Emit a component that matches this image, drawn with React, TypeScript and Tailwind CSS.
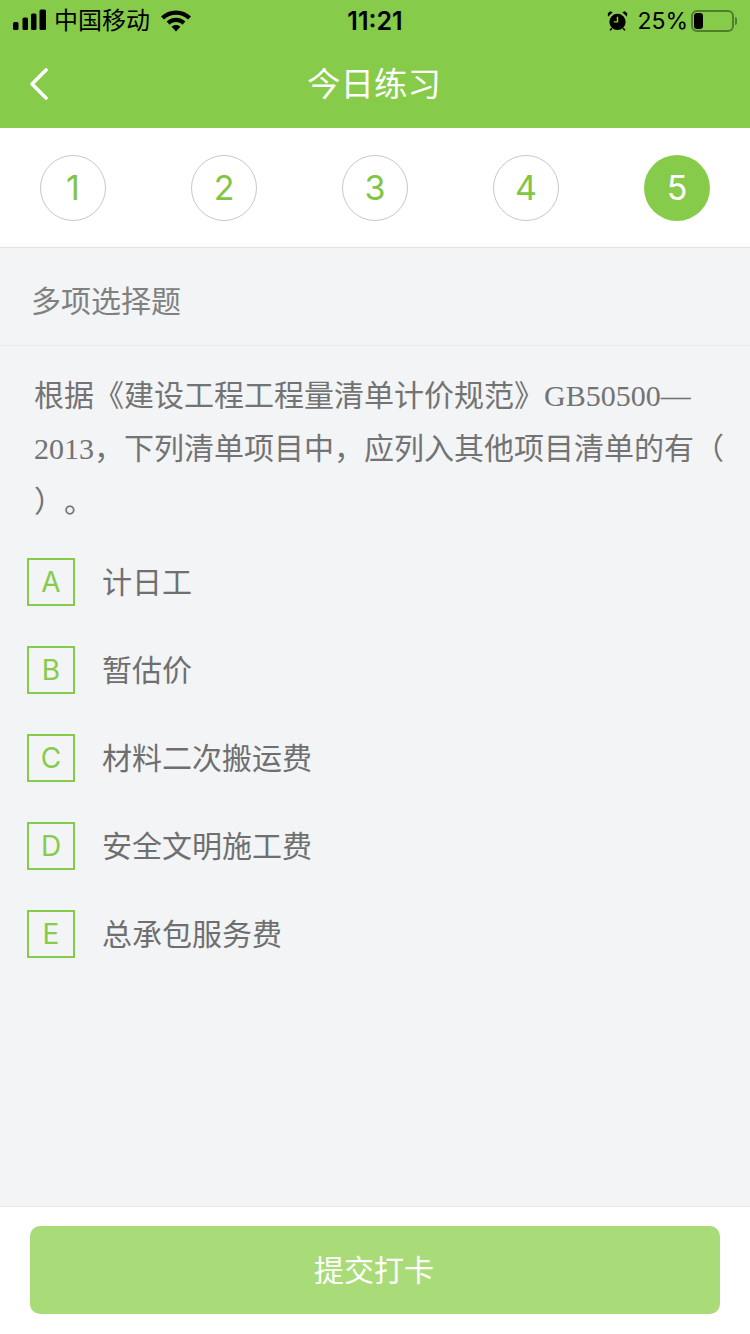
import React from 'react';

const SANS = "font-['Inter','Noto_Sans_CJK_SC',sans-serif]";

const options = [
  { key: 'A', text: '计日工' },
  { key: 'B', text: '暂估价' },
  { key: 'C', text: '材料二次搬运费' },
  { key: 'D', text: '安全文明施工费' },
  { key: 'E', text: '总承包服务费' },
];

const StatusBar = () => (
  <div className="flex h-10 items-center justify-between pl-[13px] pr-[13px] pt-[2px] text-black">
    <div className="flex items-center">
      <svg width="34" height="24" viewBox="0 0 34 24" fill="currentColor">
        <rect x="0" y="13" width="5.5" height="8" rx="1.5" />
        <rect x="9.5" y="8.5" width="5.5" height="12.5" rx="1.5" />
        <rect x="18" y="4.5" width="5.5" height="16.5" rx="1.5" />
        <rect x="26.5" y="0.5" width="6.5" height="20.5" rx="1.5" />
      </svg>
      <span className="ml-[7px] text-[24px] leading-none">中国移动</span>
      <svg className="ml-[11px]" width="30" height="22" viewBox="0 0 30 22" fill="currentColor">
        <path d="M15 0.5C9.2 0.5 4 2.7 0 6.4l3 3.2C6.2 6.6 10.4 4.8 15 4.8s8.8 1.8 12 4.8l3-3.2C26 2.7 20.8 0.5 15 0.5z" />
        <path d="M15 7.8c-3.6 0-6.9 1.4-9.4 3.7l3 3.2c1.7-1.6 3.9-2.6 6.4-2.6s4.7 1 6.4 2.6l3-3.2C22 9.2 18.6 7.8 15 7.8z" />
        <path d="M15 15c-1.7 0-3.2.7-4.4 1.7L15 21.5l4.4-4.8C18.2 15.7 16.7 15 15 15z" />
      </svg>
    </div>
    <span className="absolute left-0 right-0 text-center text-[25px] font-semibold leading-none">11:21</span>
    <div className="flex items-center">
      <svg width="21" height="22" viewBox="0 0 22 22" fill="currentColor">
        <circle cx="11" cy="12" r="8.5" />
        <path d="M1 6.5 6 1.8 3.4.8.8 3zM21 6.5 16 1.8l2.6-1L21.2 3zM4.5 18l-2 2.5 1.2.8 2.2-2.2zM17.5 18l2 2.5-1.2.8-2.2-2.2z" />
        <path d="M10.2 6.5h1.6v6.2H7v-1.5h3.2z" fill="#87cb4a" />
      </svg>
      <span className="ml-[9px] text-[23px] leading-none">25%</span>
      <div className="ml-[3px] flex h-[22px] w-[43px] items-center rounded-[6px] border-2 border-[#4f7f2b] p-[1px]">
        <div className="h-full w-[9px] rounded-[3px] bg-black" />
      </div>
      <div className="ml-[1px] h-[8px] w-[2px] rounded-r-full bg-[#4f7f2b]" />
    </div>
  </div>
);

export default function App() {
  return (
    <div className={`${SANS} relative flex h-[1334px] w-[750px] flex-col overflow-hidden bg-[#f2f4f6]`}>
      {/* Header */}
      <div className="relative h-32 shrink-0 bg-[#87cb4a]">
        <StatusBar />
        <div className="relative flex h-[88px] items-center justify-center pt-[2px]">
          <svg className="absolute left-[29px] top-[28px]" width="20" height="32" viewBox="0 0 20 32" fill="none" stroke="white" strokeWidth="3.6" strokeLinecap="round" strokeLinejoin="round">
            <path d="M17 2 3 16l14 14" />
          </svg>
          <span className="pr-[2px] text-[33.5px] leading-none text-white">今日练习</span>
        </div>
      </div>

      {/* Steps */}
      <div className="flex h-[120px] shrink-0 items-center justify-between border-b border-[#e3e4e6] bg-white pl-10 pr-10">
        {[1, 2, 3, 4].map(n => (
          <div key={n} className="flex h-[66px] w-[66px] items-center justify-center rounded-full border border-[#c8c8c8] text-[34px] text-[#82c545]">
            {n}
          </div>
        ))}
        <div className="flex h-[66px] w-[66px] items-center justify-center rounded-full bg-[#87cb4a] text-[34px] text-white">5</div>
      </div>

      {/* Question type */}
      <div className="flex h-[98px] shrink-0 items-center border-b border-[#e6e8ea] pl-[31px] pt-[10px] text-[30px] text-[#808080]">
        多项选择题
      </div>

      {/* Question */}
      <div className="shrink-0 pl-[34px] pr-[20px] pt-[23px] text-[30px] leading-[53px] text-[#737373] [text-spacing-trim:space-all] font-['Liberation_Serif','Noto_Sans_CJK_SC',serif]">
        根据《建设工程工程量清单计价规范》GB50500—2013，下列清单项目中，应列入其他项目清单的有（ ）。
      </div>

      {/* Options */}
      <div className="mt-[30px] flex flex-col gap-[40px] pl-[27px]">
        {options.map(o => (
          <div key={o.key} className="flex items-center">
            <div className="flex h-12 w-12 items-center justify-center border-2 border-[#87cb4a] text-[28px] text-[#87cb4a]">{o.key}</div>
            <span className="ml-[27px] text-[30px] text-[#6f6f6f]">{o.text}</span>
          </div>
        ))}
      </div>

      {/* Submit */}
      <div className="mt-auto flex h-[128px] shrink-0 justify-center border-t border-[#e8e8e8] bg-white pt-[19px]">
        <button className="flex h-[88px] w-[690px] items-center justify-center rounded-[10px] bg-[#a9dc78] pr-[2px] text-[30px] text-white">提交打卡</button>
      </div>
    </div>
  );
}
